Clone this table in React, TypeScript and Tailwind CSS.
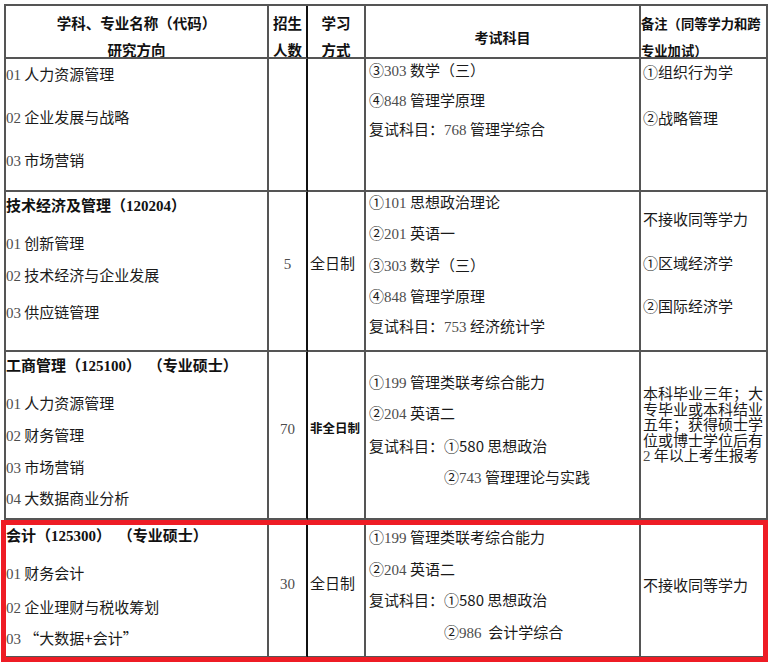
import React from "react";

// serif digits, a bit lighter than the CJK text
function N({ children }: { children: React.ReactNode }) {
  return <span className="font-['Liberation_Serif',serif] text-[#4d4d4d]">{children}</span>;
}

function BN({ children }: { children: React.ReactNode }) {
  return <span className="font-['Liberation_Serif',serif]">{children}</span>;
}

const cell = "border-r-2 border-b-2 border-[#555] overflow-hidden";
const line = "h-[20px] leading-[20px] whitespace-nowrap";
const title = "h-[20px] leading-[20px] whitespace-nowrap font-bold text-[15px] text-[#111]";

export default function App() {
  return (
    <div className="relative w-[772px] h-[664px] bg-white pt-[4px] pl-[4px] font-['Noto_Sans_CJK_SC',sans-serif] text-[15px] text-[#1a1a1a]">
      <div className="grid grid-cols-[263px_39px_58px_275px_127px] grid-rows-[53px_133px_160px_168px_138px] w-[764px] border-l-2 border-t-2 border-[#555]">
        {/* header */}
        <div className={`${cell} pt-[3px] text-center font-bold text-[14.5px] leading-[27px] text-[#111]`}>
          <div>学科、专业名称（代码）</div>
          <div>研究方向</div>
        </div>
        <div className={`${cell} !border-r-[#111] pt-[3px] text-center font-bold text-[14.5px] leading-[27px] text-[#111]`}>
          <div>招生</div>
          <div>人数</div>
        </div>
        <div className={`${cell} pt-[3px] text-center font-bold text-[14.5px] leading-[27px] text-[#111]`}>
          <div>学习</div>
          <div>方式</div>
        </div>
        <div className={`${cell} pt-[21px] text-center font-bold text-[14px] leading-[20px] text-[#111]`}>
          考试科目
        </div>
        <div className={`${cell} pt-[4px] font-bold text-[13.3px] leading-[27px] text-[#111] whitespace-nowrap`}>
          <div>备注（同等学力和跨</div>
          <div>专业加试）</div>
        </div>

        {/* row 1 */}
        <div className={`${cell} pt-[5px]`}>
          <div className={line}><N>01</N> 人力资源管理</div>
          <div className={`${line} mt-[23px]`}><N>02</N> 企业发展与战略</div>
          <div className={`${line} mt-[23px]`}><N>03</N> 市场营销</div>
        </div>
        <div className={`${cell} !border-r-[#111]`}></div>
        <div className={cell}></div>
        <div className={`${cell} pt-[1px] pl-[3px]`}>
          <div className={line}>③<N>303</N> 数学（三）</div>
          <div className={`${line} mt-[10px]`}>④<N>848</N> 管理学原理</div>
          <div className={`${line} mt-[9px]`}>复试科目：<N>768</N> 管理学综合</div>
        </div>
        <div className={`${cell} pt-[3px] pl-[2px]`}>
          <div className={line}>①组织行为学</div>
          <div className={`${line} mt-[26px]`}>②战略管理</div>
        </div>

        {/* row 2 */}
        <div className={`${cell} pt-[3px]`}>
          <div className={title}>技术经济及管理（<BN>120204</BN>）</div>
          <div className={`${line} mt-[18px]`}><N>01</N> 创新管理</div>
          <div className={`${line} mt-[12px]`}><N>02</N> 技术经济与企业发展</div>
          <div className={`${line} mt-[17px]`}><N>03</N> 供应链管理</div>
        </div>
        <div className={`${cell} !border-r-[#111] pt-[61px] text-center`}>
          <div className={line}><N>5</N></div>
        </div>
        <div className={`${cell} pt-[61px] pl-[2px]`}>
          <div className={line}>全日制</div>
        </div>
        <div className={`${cell} pt-[0px] pl-[3px]`}>
          <div className={line}>①<N>101</N> 思想政治理论</div>
          <div className={`${line} mt-[11px]`}>②<N>201</N> 英语一</div>
          <div className={`${line} mt-[12px]`}>③<N>303</N> 数学（三）</div>
          <div className={`${line} mt-[11px]`}>④<N>848</N> 管理学原理</div>
          <div className={`${line} mt-[10px]`}>复试科目：<N>753</N> 经济统计学</div>
        </div>
        <div className={`${cell} pt-[17px] pl-[2px]`}>
          <div className={line}>不接收同等学力</div>
          <div className={`${line} mt-[24px]`}>①区域经济学</div>
          <div className={`${line} mt-[23px]`}>②国际经济学</div>
        </div>

        {/* row 3 */}
        <div className={`${cell} pt-[3px]`}>
          <div className={title}>工商管理（<BN>125100</BN>）{"\u00a0\u00a0"}（专业硕士）</div>
          <div className={`${line} mt-[18px]`}><N>01</N> 人力资源管理</div>
          <div className={`${line} mt-[12px]`}><N>02</N> 财务管理</div>
          <div className={`${line} mt-[12px]`}><N>03</N> 市场营销</div>
          <div className={`${line} mt-[11px]`}><N>04</N> 大数据商业分析</div>
        </div>
        <div className={`${cell} !border-r-[#111] pt-[66px] text-center`}>
          <div className={line}><N>70</N></div>
        </div>
        <div className={`${cell} pt-[66px] pl-[2px]`}>
          <div className="h-[20px] leading-[20px] whitespace-nowrap font-bold text-[12.5px] text-[#111]">非全日制</div>
        </div>
        <div className={`${cell} pt-[20px] pl-[3px]`}>
          <div className={line}>①<N>199</N> 管理类联考综合能力</div>
          <div className={`${line} mt-[11px]`}>②<N>204</N> 英语二</div>
          <div className={`${line} mt-[13px]`}>复试科目：①580 思想政治</div>
          <div className={`${line} mt-[11px] pl-[75px]`}>②<N>743</N> 管理理论与实践</div>
        </div>
        <div className={`${cell} pt-[33px] pl-[2px] leading-[15.5px] whitespace-nowrap`}>
          <div>本科毕业三年；大</div>
          <div>专毕业或本科结业</div>
          <div>五年；获得硕士学</div>
          <div>位或博士学位后有</div>
          <div><N>2</N> 年以上考生报考</div>
        </div>

        {/* row 4 */}
        <div className={`${cell} pt-[5px]`}>
          <div className={title}>会计（<BN>125300</BN>）{"\u00a0\u00a0"}（专业硕士）</div>
          <div className={`${line} mt-[18px]`}><N>01</N> 财务会计</div>
          <div className={`${line} mt-[14px]`}><N>02</N> 企业理财与税收筹划</div>
          <div className={`${line} mt-[11px]`}><N>03</N> “大数据+会计”</div>
        </div>
        <div className={`${cell} !border-r-[#111] pt-[53px] text-center`}>
          <div className={line}><N>30</N></div>
        </div>
        <div className={`${cell} pt-[53px] pl-[2px]`}>
          <div className={line}>全日制</div>
        </div>
        <div className={`${cell} pt-[7px] pl-[3px]`}>
          <div className={line}>①<N>199</N> 管理类联考综合能力</div>
          <div className={`${line} mt-[12px]`}>②<N>204</N> 英语二</div>
          <div className={`${line} mt-[11px]`}>复试科目：①580 思想政治</div>
          <div className={`${line} mt-[12px] pl-[75px]`}>②<N>986</N>&nbsp; 会计学综合</div>
        </div>
        <div className={`${cell} pt-[55px] pl-[2px]`}>
          <div className={line}>不接收同等学力</div>
        </div>
      </div>

      {/* red highlight frame over the last row */}
      <div className="absolute left-[1px] top-[520px] w-[767px] h-[142px] border-[5px] border-[#ee1c25]"></div>
    </div>
  );
}
